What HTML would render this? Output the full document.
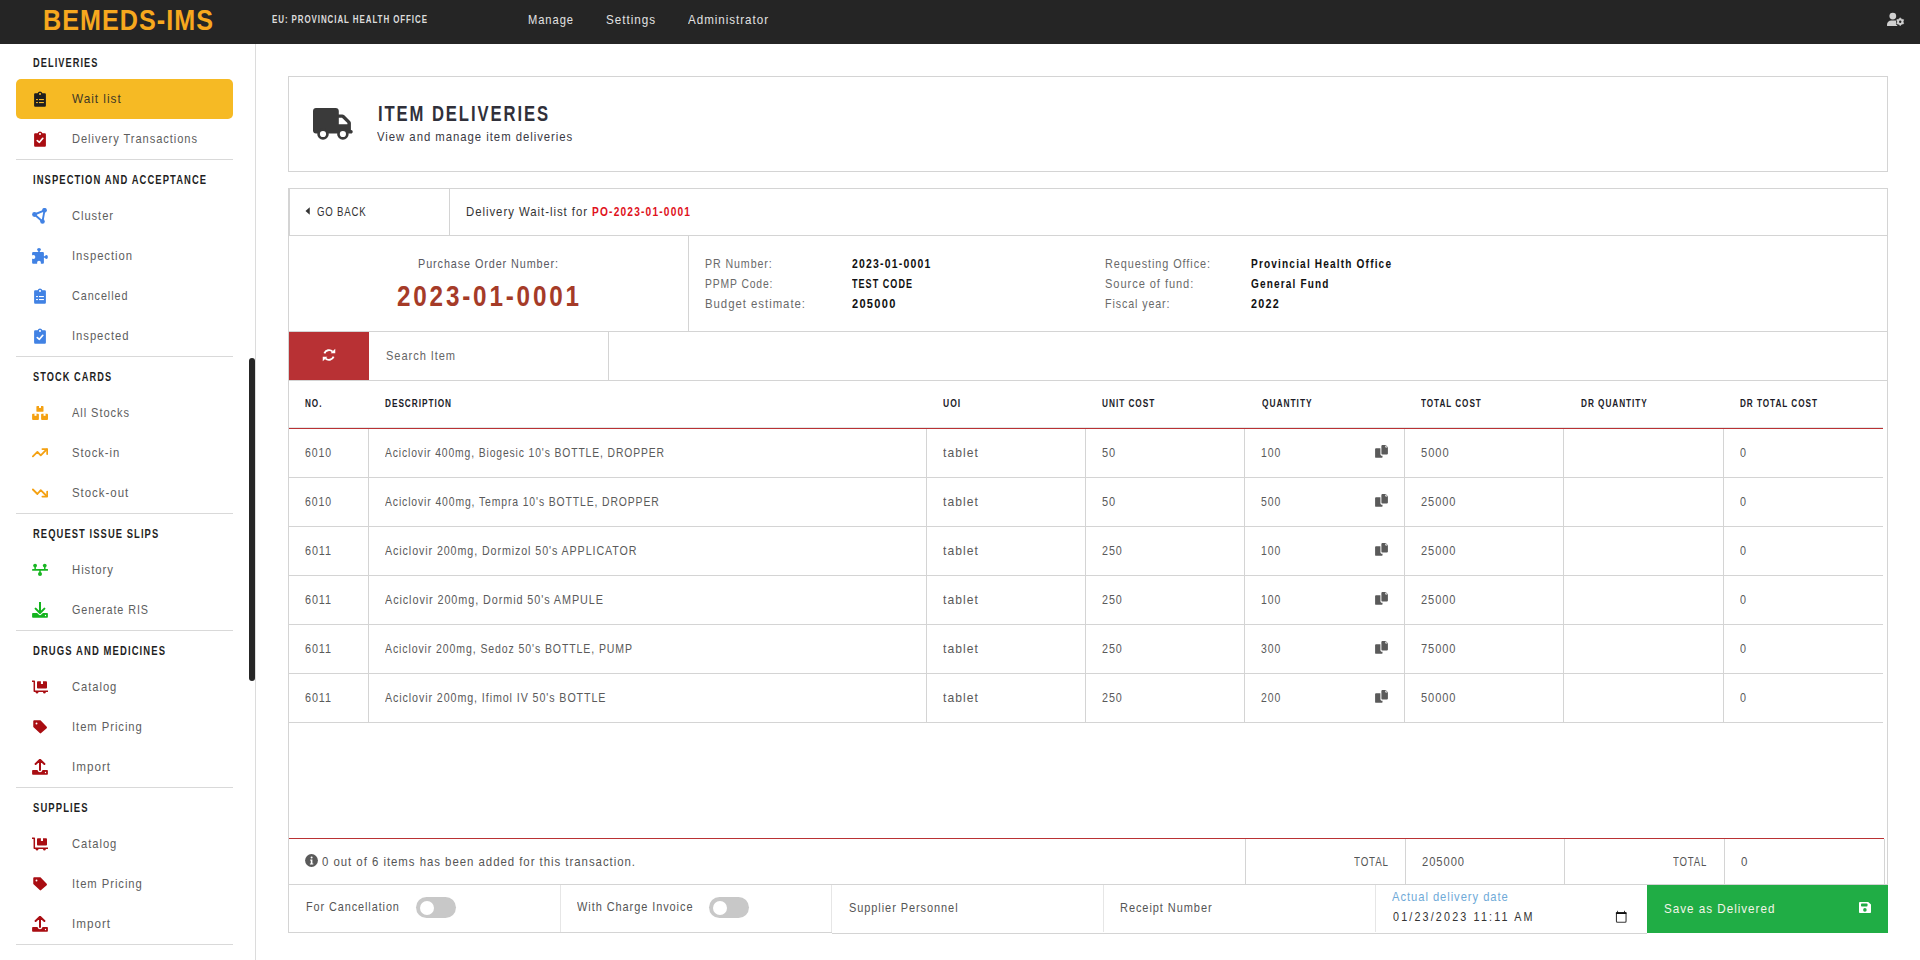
<!DOCTYPE html>
<html><head><meta charset="utf-8"><title>BEMEDS-IMS</title>
<style>
html,body{margin:0;padding:0;width:1920px;height:960px;overflow:hidden;background:#fff;}
body{position:relative;font-family:"Liberation Sans",sans-serif;}
div,span{position:absolute;box-sizing:border-box;}
.t{white-space:pre;line-height:1;transform-origin:0 0;}
.ic svg{display:block;width:100%;height:100%;}
</style></head><body>
<div style="left:0px;top:0px;width:1920px;height:44px;background:#252525"></div>
<span class="t" style="left:43.00px;top:6px;font-size:29px;color:#F7A81E;font-weight:bold;letter-spacing:1.20px;transform:scaleX(0.8670);">BEMEDS-IMS</span>
<span class="t" style="left:272.00px;top:13px;font-size:11.6px;color:#dcdcdc;font-weight:bold;letter-spacing:1.34px;transform:scaleX(0.6864);">EU: PROVINCIAL HEALTH OFFICE</span>
<span class="t" style="left:528.00px;top:13px;font-size:13px;color:#e2e2e2;letter-spacing:1.10px;transform:scaleX(0.8574);">Manage</span>
<span class="t" style="left:606.00px;top:13px;font-size:13px;color:#e2e2e2;letter-spacing:1.10px;transform:scaleX(0.8963);">Settings</span>
<span class="t" style="left:688.00px;top:13px;font-size:13px;color:#e2e2e2;letter-spacing:1.10px;transform:scaleX(0.8910);">Administrator</span>
<div style="left:255px;top:44px;width:1px;height:916px;background:#dcdcdc"></div>
<div style="left:249px;top:358px;width:6px;height:323px;background:#262626;border-radius:3px"></div>
<span class="t" style="left:32.50px;top:56px;font-size:13px;color:#1f1f1f;font-weight:bold;letter-spacing:1.50px;transform:scaleX(0.7104);">DELIVERIES</span>
<div style="left:16px;top:79px;width:217px;height:40px;background:#F6BA24;border-radius:5px"></div>
<span class="t" style="left:72.00px;top:92px;font-size:13px;color:#3e3826;letter-spacing:1.10px;transform:scaleX(0.9058);">Wait list</span>
<div class="ic" style="left:32px;top:91px;width:16px;height:16px"><svg viewBox="0 0 16 16"><path fill="#1e1e1e" d="M5.6 2.2A2.6 2.6 0 0 1 10.4 2.2H12.6c.75 0 1.3.55 1.3 1.3V14.45c0 .75-.55 1.3-1.3 1.3H3.4c-.75 0-1.3-.55-1.3-1.3V3.5c0-.75.55-1.3 1.3-1.3z"/><rect x="7" y="2" width="2" height="1.8" rx=".4" fill="#F6B927"/><rect x="4.1" y="8" width="1.8" height="1.1" fill="#F6B927"/><rect x="7" y="8" width="4.9" height="1.1" fill="#F6B927"/><rect x="4.1" y="11" width="1.8" height="1.1" fill="#F6B927"/><rect x="7" y="11" width="4.9" height="1.1" fill="#F6B927"/></svg></div>
<span class="t" style="left:72.00px;top:132px;font-size:13px;color:#5e5e5e;letter-spacing:1.10px;transform:scaleX(0.8546);">Delivery Transactions</span>
<div class="ic" style="left:32px;top:131px;width:16px;height:16px"><svg viewBox="0 0 16 16"><path fill="#A90D12" d="M5.6 2.2A2.6 2.6 0 0 1 10.4 2.2H12.6c.75 0 1.3.55 1.3 1.3V14.45c0 .75-.55 1.3-1.3 1.3H3.4c-.75 0-1.3-.55-1.3-1.3V3.5c0-.75.55-1.3 1.3-1.3z"/><rect x="7" y="2" width="2" height="1.8" rx=".4" fill="#fff"/><path d="M5.3 9.6l2.1 1.7 3.4-4" stroke="#fff" stroke-width="1.7" fill="none" stroke-linecap="round" stroke-linejoin="round"/></svg></div>
<div style="left:16px;top:159px;width:217px;height:1px;background:#d9d9d9"></div>
<span class="t" style="left:32.50px;top:173px;font-size:13px;color:#1f1f1f;font-weight:bold;letter-spacing:1.50px;transform:scaleX(0.7237);">INSPECTION AND ACCEPTANCE</span>
<span class="t" style="left:72.00px;top:209px;font-size:13px;color:#5e5e5e;letter-spacing:1.10px;transform:scaleX(0.8580);">Cluster</span>
<div class="ic" style="left:32px;top:208px;width:16px;height:16px"><svg viewBox="0 0 16 16"><path d="M2.5 6.5L12.5 2.3L10.5 13.5z" fill="none" stroke="#4182E4" stroke-width="1.9" stroke-linejoin="round"/><circle cx="12.5" cy="2.3" r="2.4" fill="#4182E4"/><circle cx="2.5" cy="6.5" r="2.4" fill="#4182E4"/><circle cx="10.5" cy="13.5" r="2.3" fill="#4182E4"/></svg></div>
<span class="t" style="left:72.00px;top:249px;font-size:13px;color:#5e5e5e;letter-spacing:1.10px;transform:scaleX(0.8675);">Inspection</span>
<div class="ic" style="left:32px;top:248px;width:16px;height:16px"><svg viewBox="0 0 16 16"><rect x="0.1" y="4" width="11.8" height="11.8" rx="1" fill="#4182E4"/><rect x="6.2" y="1.8" width="1.6" height="3" fill="#4182E4"/><ellipse cx="7" cy="1.6" rx="1.9" ry="1.5" fill="#4182E4"/><rect x="11" y="8.2" width="2.6" height="1.6" fill="#4182E4"/><ellipse cx="14.4" cy="9" rx="1.5" ry="1.9" fill="#4182E4"/><circle cx="1.4" cy="9" r="1.9" fill="#fff"/><rect x="-1" y="7.6" width="1.8" height="2.8" fill="#fff"/><circle cx="7" cy="14.7" r="1.9" fill="#fff"/><rect x="5.6" y="15" width="2.8" height="2" fill="#fff"/></svg></div>
<span class="t" style="left:72.00px;top:289px;font-size:13px;color:#5e5e5e;letter-spacing:1.10px;transform:scaleX(0.8317);">Cancelled</span>
<div class="ic" style="left:32px;top:288px;width:16px;height:16px"><svg viewBox="0 0 16 16"><path fill="#4182E4" d="M5.6 2.2A2.6 2.6 0 0 1 10.4 2.2H12.6c.75 0 1.3.55 1.3 1.3V14.45c0 .75-.55 1.3-1.3 1.3H3.4c-.75 0-1.3-.55-1.3-1.3V3.5c0-.75.55-1.3 1.3-1.3z"/><rect x="7" y="2" width="2" height="1.8" rx=".4" fill="#fff"/><rect x="4.1" y="8" width="1.8" height="1.1" fill="#fff"/><rect x="7" y="8" width="4.9" height="1.1" fill="#fff"/><rect x="4.1" y="11" width="1.8" height="1.1" fill="#fff"/><rect x="7" y="11" width="4.9" height="1.1" fill="#fff"/></svg></div>
<span class="t" style="left:72.00px;top:329px;font-size:13px;color:#5e5e5e;letter-spacing:1.10px;transform:scaleX(0.8670);">Inspected</span>
<div class="ic" style="left:32px;top:328px;width:16px;height:16px"><svg viewBox="0 0 16 16"><path fill="#4182E4" d="M5.6 2.2A2.6 2.6 0 0 1 10.4 2.2H12.6c.75 0 1.3.55 1.3 1.3V14.45c0 .75-.55 1.3-1.3 1.3H3.4c-.75 0-1.3-.55-1.3-1.3V3.5c0-.75.55-1.3 1.3-1.3z"/><rect x="7" y="2" width="2" height="1.8" rx=".4" fill="#fff"/><path d="M5.3 9.6l2.1 1.7 3.4-4" stroke="#fff" stroke-width="1.7" fill="none" stroke-linecap="round" stroke-linejoin="round"/></svg></div>
<div style="left:16px;top:356px;width:217px;height:1px;background:#d9d9d9"></div>
<span class="t" style="left:32.50px;top:370px;font-size:13px;color:#1f1f1f;font-weight:bold;letter-spacing:1.50px;transform:scaleX(0.7094);">STOCK CARDS</span>
<span class="t" style="left:72.00px;top:406px;font-size:13px;color:#5e5e5e;letter-spacing:1.10px;transform:scaleX(0.8511);">All Stocks</span>
<div class="ic" style="left:32px;top:405px;width:16px;height:16px"><svg viewBox="0 0 16 16"><rect x="4.4" y="0.9" width="7.1" height="5.9" rx=".9" fill="#F4A112"/><rect x="0.1" y="8.75" width="6.8" height="6.15" rx=".9" fill="#F4A112"/><rect x="9.1" y="8.75" width="6.9" height="6.15" rx=".9" fill="#F4A112"/><rect x="7" y="0.5" width="2" height="2.4" fill="#fff"/><rect x="2.5" y="8.4" width="2" height="2.4" fill="#fff"/><rect x="11.55" y="8.4" width="2" height="2.4" fill="#fff"/></svg></div>
<span class="t" style="left:72.00px;top:446px;font-size:13px;color:#5e5e5e;letter-spacing:1.10px;transform:scaleX(0.8636);">Stock-in</span>
<div class="ic" style="left:32px;top:445px;width:16px;height:16px"><svg viewBox="0 0 16 16"><path d="M0.9 11.4L5.4 6.9L8.75 10.3L14.6 4.5" fill="none" stroke="#F4A112" stroke-width="1.8" stroke-linecap="round" stroke-linejoin="round"/><path d="M10.4 4.1h4.8v4.9" fill="none" stroke="#F4A112" stroke-width="1.8" stroke-linecap="round" stroke-linejoin="round"/></svg></div>
<span class="t" style="left:72.00px;top:486px;font-size:13px;color:#5e5e5e;letter-spacing:1.10px;transform:scaleX(0.8821);">Stock-out</span>
<div class="ic" style="left:32px;top:485px;width:16px;height:16px"><svg viewBox="0 0 16 16"><path d="M0.9 4.5L5.4 9L8.75 5.1L14.6 11" fill="none" stroke="#F4A112" stroke-width="1.8" stroke-linecap="round" stroke-linejoin="round"/><path d="M10.4 11.6h4.8V6.6" fill="none" stroke="#F4A112" stroke-width="1.8" stroke-linecap="round" stroke-linejoin="round"/></svg></div>
<div style="left:16px;top:513px;width:217px;height:1px;background:#d9d9d9"></div>
<span class="t" style="left:32.50px;top:527px;font-size:13px;color:#1f1f1f;font-weight:bold;letter-spacing:1.50px;transform:scaleX(0.7210);">REQUEST ISSUE SLIPS</span>
<span class="t" style="left:72.00px;top:563px;font-size:13px;color:#5e5e5e;letter-spacing:1.10px;transform:scaleX(0.8715);">History</span>
<div class="ic" style="left:32px;top:562px;width:16px;height:16px"><svg viewBox="0 0 16 16"><rect x="0.1" y="7" width="15.9" height="1.8" rx=".5" fill="#18B622"/><rect x="2.4" y="4" width="1.5" height="3.5" fill="#18B622"/><rect x="12" y="4" width="1.5" height="3.5" fill="#18B622"/><rect x="7.25" y="8" width="1.5" height="3" fill="#18B622"/><circle cx="3.1" cy="3.6" r="1.9" fill="#18B622"/><circle cx="12.75" cy="3.6" r="1.9" fill="#18B622"/><circle cx="8" cy="12" r="2" fill="#18B622"/></svg></div>
<span class="t" style="left:72.00px;top:603px;font-size:13px;color:#5e5e5e;letter-spacing:1.10px;transform:scaleX(0.8299);">Generate RIS</span>
<div class="ic" style="left:32px;top:602px;width:16px;height:16px"><svg viewBox="0 0 16 16"><path d="M8 0.1V10.5M3.6 6.6L8 11L12.4 6.6" stroke="#14B41E" stroke-width="2" fill="none" stroke-linecap="round" stroke-linejoin="round"/><path fill="#14B41E" d="M0.1 11.8c0-.45.35-.8.8-.8h4.2l1.6 1.6c.8.8 1.8.8 2.6 0L10.9 11h4.2c.45 0 .8.35.8.8v3.1c0 .45-.35.8-.8.8H.9c-.45 0-.8-.35-.8-.8z"/><circle cx="13.5" cy="13.5" r=".65" fill="#fff"/></svg></div>
<div style="left:16px;top:630px;width:217px;height:1px;background:#d9d9d9"></div>
<span class="t" style="left:32.50px;top:644px;font-size:13px;color:#1f1f1f;font-weight:bold;letter-spacing:1.50px;transform:scaleX(0.7289);">DRUGS AND MEDICINES</span>
<span class="t" style="left:72.00px;top:680px;font-size:13px;color:#5e5e5e;letter-spacing:1.10px;transform:scaleX(0.8617);">Catalog</span>
<div class="ic" style="left:32px;top:679px;width:16px;height:16px"><svg viewBox="0 0 16 16"><path d="M0.4 2.25h1.9v10h13.5" stroke="#A90D12" stroke-width="1.5" fill="none" stroke-linecap="round" stroke-linejoin="round"/><rect x="5" y="2.25" width="10" height="7.25" rx=".9" fill="#A90D12"/><rect x="8.9" y="2" width="2.1" height="3" fill="#fff"/><circle cx="5" cy="13.3" r="1.25" fill="#A90D12"/><circle cx="12.4" cy="13.3" r="1.25" fill="#A90D12"/></svg></div>
<span class="t" style="left:72.00px;top:720px;font-size:13px;color:#5e5e5e;letter-spacing:1.10px;transform:scaleX(0.8646);">Item Pricing</span>
<div class="ic" style="left:32px;top:719px;width:16px;height:16px"><svg viewBox="0 0 16 16"><path fill="#A90D12" d="M1.25 2.35c0-.6.5-1.1 1.1-1.1h5.6c.3 0 .55.1.75.3l6 6.3c.4.4.4 1 0 1.4L9.15 14.1c-.4.4-1 .4-1.4 0L1.55 8.3c-.2-.2-.3-.45-.3-.75z"/><circle cx="4.5" cy="4.5" r=".95" fill="#fff"/></svg></div>
<span class="t" style="left:72.00px;top:760px;font-size:13px;color:#5e5e5e;letter-spacing:1.10px;transform:scaleX(0.8975);">Import</span>
<div class="ic" style="left:32px;top:759px;width:16px;height:16px"><svg viewBox="0 0 16 16"><path d="M8 11V1.2M3.6 5L8 0.8L12.4 5" stroke="#A90D12" stroke-width="2" fill="none" stroke-linecap="round" stroke-linejoin="round"/><path fill="#A90D12" d="M0.1 11.8c0-.45.35-.8.8-.8h4.6c.5 1.5 1.3 2.2 2.5 2.2s2-.7 2.5-2.2h4.6c.45 0 .8.35.8.8v3.1c0 .45-.35.8-.8.8H.9c-.45 0-.8-.35-.8-.8z"/><circle cx="13.5" cy="13.5" r=".65" fill="#fff"/></svg></div>
<div style="left:16px;top:787px;width:217px;height:1px;background:#d9d9d9"></div>
<span class="t" style="left:32.50px;top:801px;font-size:13px;color:#1f1f1f;font-weight:bold;letter-spacing:1.50px;transform:scaleX(0.7286);">SUPPLIES</span>
<span class="t" style="left:72.00px;top:837px;font-size:13px;color:#5e5e5e;letter-spacing:1.10px;transform:scaleX(0.8617);">Catalog</span>
<div class="ic" style="left:32px;top:836px;width:16px;height:16px"><svg viewBox="0 0 16 16"><path d="M0.4 2.25h1.9v10h13.5" stroke="#A90D12" stroke-width="1.5" fill="none" stroke-linecap="round" stroke-linejoin="round"/><rect x="5" y="2.25" width="10" height="7.25" rx=".9" fill="#A90D12"/><rect x="8.9" y="2" width="2.1" height="3" fill="#fff"/><circle cx="5" cy="13.3" r="1.25" fill="#A90D12"/><circle cx="12.4" cy="13.3" r="1.25" fill="#A90D12"/></svg></div>
<span class="t" style="left:72.00px;top:877px;font-size:13px;color:#5e5e5e;letter-spacing:1.10px;transform:scaleX(0.8646);">Item Pricing</span>
<div class="ic" style="left:32px;top:876px;width:16px;height:16px"><svg viewBox="0 0 16 16"><path fill="#A90D12" d="M1.25 2.35c0-.6.5-1.1 1.1-1.1h5.6c.3 0 .55.1.75.3l6 6.3c.4.4.4 1 0 1.4L9.15 14.1c-.4.4-1 .4-1.4 0L1.55 8.3c-.2-.2-.3-.45-.3-.75z"/><circle cx="4.5" cy="4.5" r=".95" fill="#fff"/></svg></div>
<span class="t" style="left:72.00px;top:917px;font-size:13px;color:#5e5e5e;letter-spacing:1.10px;transform:scaleX(0.8975);">Import</span>
<div class="ic" style="left:32px;top:916px;width:16px;height:16px"><svg viewBox="0 0 16 16"><path d="M8 11V1.2M3.6 5L8 0.8L12.4 5" stroke="#A90D12" stroke-width="2" fill="none" stroke-linecap="round" stroke-linejoin="round"/><path fill="#A90D12" d="M0.1 11.8c0-.45.35-.8.8-.8h4.6c.5 1.5 1.3 2.2 2.5 2.2s2-.7 2.5-2.2h4.6c.45 0 .8.35.8.8v3.1c0 .45-.35.8-.8.8H.9c-.45 0-.8-.35-.8-.8z"/><circle cx="13.5" cy="13.5" r=".65" fill="#fff"/></svg></div>
<div style="left:16px;top:944px;width:217px;height:1px;background:#d9d9d9"></div>
<div style="left:288px;top:76px;width:1600px;height:96px;border:1px solid #d4d4d4"></div>
<div class="ic" style="left:313px;top:108px;width:40px;height:32px"><svg viewBox="0 0 40 32"><path fill="#3a3a3a" d="M0 3C0 1.3 1.3 0 3 0H22.8C24.5 0 25.8 1.3 25.8 3V6.4H29.2C30 6.4 30.8 6.7 31.3 7.3L37 13C37.6 13.6 37.9 14.3 37.9 15.1V22H38.2C39.1 22 39.7 22.9 39.7 23.7C39.7 24.7 39 25.5 38.1 25.5H3C1.3 25.5 0 24.2 0 22.5Z"/><path fill="#fff" d="M25.8 9.7H29L34.4 15.1V16.2H25.8Z"/><circle cx="10" cy="26" r="5.75" fill="#3a3a3a"/><circle cx="29.9" cy="26" r="5.75" fill="#3a3a3a"/><circle cx="10" cy="26" r="3.1" fill="#fff"/><circle cx="29.9" cy="26" r="3.1" fill="#fff"/></svg></div>
<span class="t" style="left:377.50px;top:103px;font-size:22px;color:#30303a;font-weight:bold;letter-spacing:2.54px;transform:scaleX(0.7555);">ITEM DELIVERIES</span>
<span class="t" style="left:376.70px;top:130px;font-size:13px;color:#3a3a44;letter-spacing:1.10px;transform:scaleX(0.8737);">View and manage item deliveries</span>
<div style="left:288px;top:188px;width:1600px;height:745px;border:1px solid #d4d4d4;border-bottom:none"></div>
<div style="left:288px;top:932px;width:544px;height:1px;background:#d4d4d4"></div>
<div style="left:832px;top:933px;width:815px;height:1px;background:#d4d4d4"></div>
<div style="left:289px;top:189px;width:1px;height:46px;background:#d4d4d4"></div>
<div style="left:449px;top:189px;width:1px;height:46px;background:#d4d4d4"></div>
<div style="left:289px;top:235px;width:1598px;height:1px;background:#d4d4d4"></div>
<div class="ic" style="left:305px;top:206px;width:6px;height:10px"><svg viewBox="0 0 6 10"><path fill="#333" d="M4.75 1.25v7.5L0.5 5z"/></svg></div>
<span class="t" style="left:316.70px;top:205px;font-size:13px;color:#333;letter-spacing:1.10px;transform:scaleX(0.7412);">GO BACK</span>
<span class="t" style="left:466.00px;top:205px;font-size:13px;color:#333;letter-spacing:1.10px;transform:scaleX(0.8756);">Delivery Wait-list for</span>
<span class="t" style="left:592.00px;top:205px;font-size:13px;color:#e0121c;font-weight:bold;letter-spacing:1.50px;transform:scaleX(0.7836);">PO-2023-01-0001</span>
<div style="left:688px;top:236px;width:1px;height:95px;background:#d4d4d4"></div>
<div style="left:289px;top:331px;width:1598px;height:1px;background:#d4d4d4"></div>
<span class="t" style="left:418.00px;top:257px;font-size:13px;color:#5a5a62;letter-spacing:1.10px;transform:scaleX(0.8317);">Purchase Order Number:</span>
<span class="t" style="left:397.00px;top:282px;font-size:29px;color:#A53B28;font-weight:bold;letter-spacing:3.35px;transform:scaleX(0.8371);">2023-01-0001</span>
<span class="t" style="left:705.00px;top:257px;font-size:13px;color:#6a6a6a;letter-spacing:1.10px;transform:scaleX(0.8191);">PR Number:</span>
<span class="t" style="left:851.70px;top:257px;font-size:13px;color:#111;font-weight:bold;letter-spacing:1.50px;transform:scaleX(0.8034);">2023-01-0001</span>
<span class="t" style="left:705.00px;top:277px;font-size:13px;color:#6a6a6a;letter-spacing:1.10px;transform:scaleX(0.7959);">PPMP Code:</span>
<span class="t" style="left:851.70px;top:277px;font-size:13px;color:#111;font-weight:bold;letter-spacing:1.50px;transform:scaleX(0.6945);">TEST CODE</span>
<span class="t" style="left:705.00px;top:297px;font-size:13px;color:#6a6a6a;letter-spacing:1.10px;transform:scaleX(0.8768);">Budget estimate:</span>
<span class="t" style="left:851.70px;top:297px;font-size:13px;color:#111;font-weight:bold;letter-spacing:1.50px;transform:scaleX(0.8510);">205000</span>
<span class="t" style="left:1104.70px;top:257px;font-size:13px;color:#6a6a6a;letter-spacing:1.10px;transform:scaleX(0.8372);">Requesting Office:</span>
<span class="t" style="left:1251.30px;top:257px;font-size:13px;color:#111;font-weight:bold;letter-spacing:1.50px;transform:scaleX(0.7759);">Provincial Health Office</span>
<span class="t" style="left:1104.70px;top:277px;font-size:13px;color:#6a6a6a;letter-spacing:1.10px;transform:scaleX(0.8526);">Source of fund:</span>
<span class="t" style="left:1251.30px;top:277px;font-size:13px;color:#111;font-weight:bold;letter-spacing:1.50px;transform:scaleX(0.7718);">General Fund</span>
<span class="t" style="left:1104.70px;top:297px;font-size:13px;color:#6a6a6a;letter-spacing:1.10px;transform:scaleX(0.8211);">Fiscal year:</span>
<span class="t" style="left:1251.30px;top:297px;font-size:13px;color:#111;font-weight:bold;letter-spacing:1.50px;transform:scaleX(0.8287);">2022</span>
<div style="left:289px;top:332px;width:80px;height:48px;background:#B83134"></div>
<div class="ic" style="left:322px;top:348px;width:14px;height:14px"><svg viewBox="0 0 14 14"><path d="M2.4 5.4A5 5 0 0 1 10.6 3.6" stroke="#ffffff" stroke-width="1.9" fill="none"/><path fill="#ffffff" d="M13.25 0.7V5.3H8.6z"/><path d="M11.6 8.6A5 5 0 0 1 3.4 10.4" stroke="#ffffff" stroke-width="1.9" fill="none"/><path fill="#ffffff" d="M0.75 13.3V8.7H5.4z"/></svg></div>
<div style="left:608px;top:332px;width:1px;height:48px;background:#d4d4d4"></div>
<div style="left:289px;top:380px;width:1598px;height:1px;background:#d4d4d4"></div>
<span class="t" style="left:385.90px;top:349px;font-size:13px;color:#666;letter-spacing:1.10px;transform:scaleX(0.8522);">Search Item</span>
<span class="t" style="left:305.30px;top:397px;font-size:11.6px;color:#1c1c28;font-weight:bold;letter-spacing:1.34px;transform:scaleX(0.7038);">NO.</span>
<span class="t" style="left:385.00px;top:397px;font-size:11.6px;color:#1c1c28;font-weight:bold;letter-spacing:1.34px;transform:scaleX(0.7123);">DESCRIPTION</span>
<span class="t" style="left:942.50px;top:397px;font-size:11.6px;color:#1c1c28;font-weight:bold;letter-spacing:1.34px;transform:scaleX(0.7339);">UOI</span>
<span class="t" style="left:1102.40px;top:397px;font-size:11.6px;color:#1c1c28;font-weight:bold;letter-spacing:1.34px;transform:scaleX(0.7143);">UNIT COST</span>
<span class="t" style="left:1261.80px;top:397px;font-size:11.6px;color:#1c1c28;font-weight:bold;letter-spacing:1.34px;transform:scaleX(0.7224);">QUANTITY</span>
<span class="t" style="left:1421.00px;top:397px;font-size:11.6px;color:#1c1c28;font-weight:bold;letter-spacing:1.34px;transform:scaleX(0.7046);">TOTAL COST</span>
<span class="t" style="left:1580.80px;top:397px;font-size:11.6px;color:#1c1c28;font-weight:bold;letter-spacing:1.34px;transform:scaleX(0.7102);">DR QUANTITY</span>
<span class="t" style="left:1739.80px;top:397px;font-size:11.6px;color:#1c1c28;font-weight:bold;letter-spacing:1.34px;transform:scaleX(0.7073);">DR TOTAL COST</span>
<div style="left:289px;top:427px;width:1594px;height:1px;background:#e2e6e6"></div>
<div style="left:289px;top:428px;width:1594px;height:1px;background:#BA3234"></div>
<div style="left:368px;top:429px;width:1px;height:48px;background:#d4d4d4"></div>
<div style="left:926px;top:429px;width:1px;height:48px;background:#d4d4d4"></div>
<div style="left:1085px;top:429px;width:1px;height:48px;background:#d4d4d4"></div>
<div style="left:1244px;top:429px;width:1px;height:48px;background:#d4d4d4"></div>
<div style="left:1404px;top:429px;width:1px;height:48px;background:#d4d4d4"></div>
<div style="left:1563px;top:429px;width:1px;height:48px;background:#d4d4d4"></div>
<div style="left:1723px;top:429px;width:1px;height:48px;background:#d4d4d4"></div>
<div style="left:289px;top:477px;width:1594px;height:1px;background:#d4d4d4"></div>
<span class="t" style="left:305.30px;top:446px;font-size:13px;color:#5a5a5a;letter-spacing:1.10px;transform:scaleX(0.8068);">6010</span>
<span class="t" style="left:385.00px;top:446px;font-size:13px;color:#5a5a5a;letter-spacing:1.10px;transform:scaleX(0.7963);">Aciclovir 400mg, Biogesic 10&#x27;s BOTTLE, DROPPER</span>
<span class="t" style="left:942.75px;top:446px;font-size:13px;color:#5a5a5a;letter-spacing:1.10px;transform:scaleX(0.9317);">tablet</span>
<span class="t" style="left:1101.90px;top:446px;font-size:13px;color:#5a5a5a;letter-spacing:1.10px;transform:scaleX(0.8485);">50</span>
<span class="t" style="left:1261.25px;top:446px;font-size:13px;color:#5a5a5a;letter-spacing:1.10px;transform:scaleX(0.8039);">100</span>
<span class="t" style="left:1421.00px;top:446px;font-size:13px;color:#5a5a5a;letter-spacing:1.10px;transform:scaleX(0.8565);">5000</span>
<span class="t" style="left:1740.00px;top:446px;font-size:13px;color:#5a5a5a;letter-spacing:1.10px;transform:scaleX(0.8301);">0</span>
<div class="ic" style="left:1375px;top:445px;width:13px;height:13px"><svg viewBox="0 0 13 13"><path fill="#5a5a5a" d="M0.1 4.1c0-.5.4-.9.9-.9h4.4v6.1c0 .9.6 1.5 1.5 1.5h0.6v1.1c0 .5-.4.9-.9.9H1c-.5 0-.9-.4-.9-.9z"/><path fill="#5a5a5a" d="M6.4 0.9c0-.5.4-.9.9-.9h3.4l2.2 2.2v6.4c0 .5-.4.9-.9.9H7.3c-.5 0-.9-.4-.9-.9z"/><path fill="#fff" d="M10.3 0.2v1.8c0 .2.2.4.4.4h1.8z"/></svg></div>
<div style="left:368px;top:478px;width:1px;height:48px;background:#d4d4d4"></div>
<div style="left:926px;top:478px;width:1px;height:48px;background:#d4d4d4"></div>
<div style="left:1085px;top:478px;width:1px;height:48px;background:#d4d4d4"></div>
<div style="left:1244px;top:478px;width:1px;height:48px;background:#d4d4d4"></div>
<div style="left:1404px;top:478px;width:1px;height:48px;background:#d4d4d4"></div>
<div style="left:1563px;top:478px;width:1px;height:48px;background:#d4d4d4"></div>
<div style="left:1723px;top:478px;width:1px;height:48px;background:#d4d4d4"></div>
<div style="left:289px;top:526px;width:1594px;height:1px;background:#d4d4d4"></div>
<span class="t" style="left:305.30px;top:495px;font-size:13px;color:#5a5a5a;letter-spacing:1.10px;transform:scaleX(0.8068);">6010</span>
<span class="t" style="left:385.00px;top:495px;font-size:13px;color:#5a5a5a;letter-spacing:1.10px;transform:scaleX(0.8001);">Aciclovir 400mg, Tempra 10&#x27;s BOTTLE, DROPPER</span>
<span class="t" style="left:942.75px;top:495px;font-size:13px;color:#5a5a5a;letter-spacing:1.10px;transform:scaleX(0.9317);">tablet</span>
<span class="t" style="left:1101.90px;top:495px;font-size:13px;color:#5a5a5a;letter-spacing:1.10px;transform:scaleX(0.8485);">50</span>
<span class="t" style="left:1261.25px;top:495px;font-size:13px;color:#5a5a5a;letter-spacing:1.10px;transform:scaleX(0.8039);">500</span>
<span class="t" style="left:1421.00px;top:495px;font-size:13px;color:#5a5a5a;letter-spacing:1.10px;transform:scaleX(0.8507);">25000</span>
<span class="t" style="left:1740.00px;top:495px;font-size:13px;color:#5a5a5a;letter-spacing:1.10px;transform:scaleX(0.8301);">0</span>
<div class="ic" style="left:1375px;top:494px;width:13px;height:13px"><svg viewBox="0 0 13 13"><path fill="#5a5a5a" d="M0.1 4.1c0-.5.4-.9.9-.9h4.4v6.1c0 .9.6 1.5 1.5 1.5h0.6v1.1c0 .5-.4.9-.9.9H1c-.5 0-.9-.4-.9-.9z"/><path fill="#5a5a5a" d="M6.4 0.9c0-.5.4-.9.9-.9h3.4l2.2 2.2v6.4c0 .5-.4.9-.9.9H7.3c-.5 0-.9-.4-.9-.9z"/><path fill="#fff" d="M10.3 0.2v1.8c0 .2.2.4.4.4h1.8z"/></svg></div>
<div style="left:368px;top:527px;width:1px;height:48px;background:#d4d4d4"></div>
<div style="left:926px;top:527px;width:1px;height:48px;background:#d4d4d4"></div>
<div style="left:1085px;top:527px;width:1px;height:48px;background:#d4d4d4"></div>
<div style="left:1244px;top:527px;width:1px;height:48px;background:#d4d4d4"></div>
<div style="left:1404px;top:527px;width:1px;height:48px;background:#d4d4d4"></div>
<div style="left:1563px;top:527px;width:1px;height:48px;background:#d4d4d4"></div>
<div style="left:1723px;top:527px;width:1px;height:48px;background:#d4d4d4"></div>
<div style="left:289px;top:575px;width:1594px;height:1px;background:#d4d4d4"></div>
<span class="t" style="left:305.30px;top:544px;font-size:13px;color:#5a5a5a;letter-spacing:1.10px;transform:scaleX(0.8320);">6011</span>
<span class="t" style="left:385.00px;top:544px;font-size:13px;color:#5a5a5a;letter-spacing:1.10px;transform:scaleX(0.8236);">Aciclovir 200mg, Dormizol 50&#x27;s APPLICATOR</span>
<span class="t" style="left:942.75px;top:544px;font-size:13px;color:#5a5a5a;letter-spacing:1.10px;transform:scaleX(0.9317);">tablet</span>
<span class="t" style="left:1101.90px;top:544px;font-size:13px;color:#5a5a5a;letter-spacing:1.10px;transform:scaleX(0.8290);">250</span>
<span class="t" style="left:1261.25px;top:544px;font-size:13px;color:#5a5a5a;letter-spacing:1.10px;transform:scaleX(0.8039);">100</span>
<span class="t" style="left:1421.00px;top:544px;font-size:13px;color:#5a5a5a;letter-spacing:1.10px;transform:scaleX(0.8507);">25000</span>
<span class="t" style="left:1740.00px;top:544px;font-size:13px;color:#5a5a5a;letter-spacing:1.10px;transform:scaleX(0.8301);">0</span>
<div class="ic" style="left:1375px;top:543px;width:13px;height:13px"><svg viewBox="0 0 13 13"><path fill="#5a5a5a" d="M0.1 4.1c0-.5.4-.9.9-.9h4.4v6.1c0 .9.6 1.5 1.5 1.5h0.6v1.1c0 .5-.4.9-.9.9H1c-.5 0-.9-.4-.9-.9z"/><path fill="#5a5a5a" d="M6.4 0.9c0-.5.4-.9.9-.9h3.4l2.2 2.2v6.4c0 .5-.4.9-.9.9H7.3c-.5 0-.9-.4-.9-.9z"/><path fill="#fff" d="M10.3 0.2v1.8c0 .2.2.4.4.4h1.8z"/></svg></div>
<div style="left:368px;top:576px;width:1px;height:48px;background:#d4d4d4"></div>
<div style="left:926px;top:576px;width:1px;height:48px;background:#d4d4d4"></div>
<div style="left:1085px;top:576px;width:1px;height:48px;background:#d4d4d4"></div>
<div style="left:1244px;top:576px;width:1px;height:48px;background:#d4d4d4"></div>
<div style="left:1404px;top:576px;width:1px;height:48px;background:#d4d4d4"></div>
<div style="left:1563px;top:576px;width:1px;height:48px;background:#d4d4d4"></div>
<div style="left:1723px;top:576px;width:1px;height:48px;background:#d4d4d4"></div>
<div style="left:289px;top:624px;width:1594px;height:1px;background:#d4d4d4"></div>
<span class="t" style="left:305.30px;top:593px;font-size:13px;color:#5a5a5a;letter-spacing:1.10px;transform:scaleX(0.8320);">6011</span>
<span class="t" style="left:385.00px;top:593px;font-size:13px;color:#5a5a5a;letter-spacing:1.10px;transform:scaleX(0.8330);">Aciclovir 200mg, Dormid 50&#x27;s AMPULE</span>
<span class="t" style="left:942.75px;top:593px;font-size:13px;color:#5a5a5a;letter-spacing:1.10px;transform:scaleX(0.9317);">tablet</span>
<span class="t" style="left:1101.90px;top:593px;font-size:13px;color:#5a5a5a;letter-spacing:1.10px;transform:scaleX(0.8290);">250</span>
<span class="t" style="left:1261.25px;top:593px;font-size:13px;color:#5a5a5a;letter-spacing:1.10px;transform:scaleX(0.8039);">100</span>
<span class="t" style="left:1421.00px;top:593px;font-size:13px;color:#5a5a5a;letter-spacing:1.10px;transform:scaleX(0.8507);">25000</span>
<span class="t" style="left:1740.00px;top:593px;font-size:13px;color:#5a5a5a;letter-spacing:1.10px;transform:scaleX(0.8301);">0</span>
<div class="ic" style="left:1375px;top:592px;width:13px;height:13px"><svg viewBox="0 0 13 13"><path fill="#5a5a5a" d="M0.1 4.1c0-.5.4-.9.9-.9h4.4v6.1c0 .9.6 1.5 1.5 1.5h0.6v1.1c0 .5-.4.9-.9.9H1c-.5 0-.9-.4-.9-.9z"/><path fill="#5a5a5a" d="M6.4 0.9c0-.5.4-.9.9-.9h3.4l2.2 2.2v6.4c0 .5-.4.9-.9.9H7.3c-.5 0-.9-.4-.9-.9z"/><path fill="#fff" d="M10.3 0.2v1.8c0 .2.2.4.4.4h1.8z"/></svg></div>
<div style="left:368px;top:625px;width:1px;height:48px;background:#d4d4d4"></div>
<div style="left:926px;top:625px;width:1px;height:48px;background:#d4d4d4"></div>
<div style="left:1085px;top:625px;width:1px;height:48px;background:#d4d4d4"></div>
<div style="left:1244px;top:625px;width:1px;height:48px;background:#d4d4d4"></div>
<div style="left:1404px;top:625px;width:1px;height:48px;background:#d4d4d4"></div>
<div style="left:1563px;top:625px;width:1px;height:48px;background:#d4d4d4"></div>
<div style="left:1723px;top:625px;width:1px;height:48px;background:#d4d4d4"></div>
<div style="left:289px;top:673px;width:1594px;height:1px;background:#d4d4d4"></div>
<span class="t" style="left:305.30px;top:642px;font-size:13px;color:#5a5a5a;letter-spacing:1.10px;transform:scaleX(0.8320);">6011</span>
<span class="t" style="left:385.00px;top:642px;font-size:13px;color:#5a5a5a;letter-spacing:1.10px;transform:scaleX(0.8105);">Aciclovir 200mg, Sedoz 50&#x27;s BOTTLE, PUMP</span>
<span class="t" style="left:942.75px;top:642px;font-size:13px;color:#5a5a5a;letter-spacing:1.10px;transform:scaleX(0.9317);">tablet</span>
<span class="t" style="left:1101.90px;top:642px;font-size:13px;color:#5a5a5a;letter-spacing:1.10px;transform:scaleX(0.8290);">250</span>
<span class="t" style="left:1261.25px;top:642px;font-size:13px;color:#5a5a5a;letter-spacing:1.10px;transform:scaleX(0.8039);">300</span>
<span class="t" style="left:1421.00px;top:642px;font-size:13px;color:#5a5a5a;letter-spacing:1.10px;transform:scaleX(0.8507);">75000</span>
<span class="t" style="left:1740.00px;top:642px;font-size:13px;color:#5a5a5a;letter-spacing:1.10px;transform:scaleX(0.8301);">0</span>
<div class="ic" style="left:1375px;top:641px;width:13px;height:13px"><svg viewBox="0 0 13 13"><path fill="#5a5a5a" d="M0.1 4.1c0-.5.4-.9.9-.9h4.4v6.1c0 .9.6 1.5 1.5 1.5h0.6v1.1c0 .5-.4.9-.9.9H1c-.5 0-.9-.4-.9-.9z"/><path fill="#5a5a5a" d="M6.4 0.9c0-.5.4-.9.9-.9h3.4l2.2 2.2v6.4c0 .5-.4.9-.9.9H7.3c-.5 0-.9-.4-.9-.9z"/><path fill="#fff" d="M10.3 0.2v1.8c0 .2.2.4.4.4h1.8z"/></svg></div>
<div style="left:368px;top:674px;width:1px;height:48px;background:#d4d4d4"></div>
<div style="left:926px;top:674px;width:1px;height:48px;background:#d4d4d4"></div>
<div style="left:1085px;top:674px;width:1px;height:48px;background:#d4d4d4"></div>
<div style="left:1244px;top:674px;width:1px;height:48px;background:#d4d4d4"></div>
<div style="left:1404px;top:674px;width:1px;height:48px;background:#d4d4d4"></div>
<div style="left:1563px;top:674px;width:1px;height:48px;background:#d4d4d4"></div>
<div style="left:1723px;top:674px;width:1px;height:48px;background:#d4d4d4"></div>
<div style="left:289px;top:722px;width:1594px;height:1px;background:#d4d4d4"></div>
<span class="t" style="left:305.30px;top:691px;font-size:13px;color:#5a5a5a;letter-spacing:1.10px;transform:scaleX(0.8320);">6011</span>
<span class="t" style="left:385.00px;top:691px;font-size:13px;color:#5a5a5a;letter-spacing:1.10px;transform:scaleX(0.8232);">Aciclovir 200mg, Ifimol IV 50&#x27;s BOTTLE</span>
<span class="t" style="left:942.75px;top:691px;font-size:13px;color:#5a5a5a;letter-spacing:1.10px;transform:scaleX(0.9317);">tablet</span>
<span class="t" style="left:1101.90px;top:691px;font-size:13px;color:#5a5a5a;letter-spacing:1.10px;transform:scaleX(0.8290);">250</span>
<span class="t" style="left:1261.25px;top:691px;font-size:13px;color:#5a5a5a;letter-spacing:1.10px;transform:scaleX(0.8039);">200</span>
<span class="t" style="left:1421.00px;top:691px;font-size:13px;color:#5a5a5a;letter-spacing:1.10px;transform:scaleX(0.8507);">50000</span>
<span class="t" style="left:1740.00px;top:691px;font-size:13px;color:#5a5a5a;letter-spacing:1.10px;transform:scaleX(0.8301);">0</span>
<div class="ic" style="left:1375px;top:690px;width:13px;height:13px"><svg viewBox="0 0 13 13"><path fill="#5a5a5a" d="M0.1 4.1c0-.5.4-.9.9-.9h4.4v6.1c0 .9.6 1.5 1.5 1.5h0.6v1.1c0 .5-.4.9-.9.9H1c-.5 0-.9-.4-.9-.9z"/><path fill="#5a5a5a" d="M6.4 0.9c0-.5.4-.9.9-.9h3.4l2.2 2.2v6.4c0 .5-.4.9-.9.9H7.3c-.5 0-.9-.4-.9-.9z"/><path fill="#fff" d="M10.3 0.2v1.8c0 .2.2.4.4.4h1.8z"/></svg></div>
<div style="left:289px;top:838px;width:1595px;height:1px;background:#BA3234"></div>
<div style="left:1245px;top:839px;width:1px;height:45px;background:#d4d4d4"></div>
<div style="left:1405px;top:839px;width:1px;height:45px;background:#d4d4d4"></div>
<div style="left:1564px;top:839px;width:1px;height:45px;background:#d4d4d4"></div>
<div style="left:1724px;top:839px;width:1px;height:45px;background:#d4d4d4"></div>
<div style="left:1884px;top:839px;width:1px;height:45px;background:#d4d4d4"></div>
<div style="left:289px;top:884px;width:1598px;height:1px;background:#d4d4d4"></div>
<div class="ic" style="left:305px;top:854px;width:13px;height:13px"><svg viewBox="0 0 13 13"><circle cx="6.5" cy="6.5" r="6.4" fill="#5a5a5a"/><circle cx="6.6" cy="3.6" r="1" fill="#fff"/><path fill="#fff" d="M5.3 5.6h2.1v3.9h.9v1.1H4.9V9.5h.9V6.7h-.5z"/></svg></div>
<span class="t" style="left:322.00px;top:855px;font-size:13px;color:#555;letter-spacing:1.10px;transform:scaleX(0.8783);">0 out of 6 items has been added for this transaction.</span>
<span class="t" style="left:1354.00px;top:855px;font-size:13px;color:#555;letter-spacing:1.10px;transform:scaleX(0.7540);">TOTAL</span>
<span class="t" style="left:1422.00px;top:855px;font-size:13px;color:#555;letter-spacing:1.10px;transform:scaleX(0.8592);">205000</span>
<span class="t" style="left:1673.30px;top:855px;font-size:13px;color:#555;letter-spacing:1.10px;transform:scaleX(0.7385);">TOTAL</span>
<span class="t" style="left:1740.60px;top:855px;font-size:13px;color:#555;letter-spacing:1.10px;transform:scaleX(0.8854);">0</span>
<div style="left:560px;top:885px;width:1px;height:47px;background:#e6e6e6"></div>
<div style="left:831px;top:885px;width:1px;height:47px;background:#e6e6e6"></div>
<div style="left:1103px;top:885px;width:1px;height:47px;background:#e6e6e6"></div>
<div style="left:1375px;top:885px;width:1px;height:47px;background:#e6e6e6"></div>
<span class="t" style="left:305.60px;top:900px;font-size:13px;color:#555;letter-spacing:1.10px;transform:scaleX(0.8358);">For Cancellation</span>
<span class="t" style="left:577.00px;top:900px;font-size:13px;color:#555;letter-spacing:1.10px;transform:scaleX(0.8440);">With Charge Invoice</span>
<div style="left:416px;top:897px;width:40px;height:21px;background:#c8c8c8;border-radius:11px"></div>
<div style="left:420px;top:900.5px;width:14px;height:14px;background:#fff;border-radius:50%"></div>
<div style="left:709px;top:897px;width:40px;height:21px;background:#c8c8c8;border-radius:11px"></div>
<div style="left:713px;top:900.5px;width:14px;height:14px;background:#fff;border-radius:50%"></div>
<span class="t" style="left:848.90px;top:901px;font-size:13px;color:#555;letter-spacing:1.10px;transform:scaleX(0.8448);">Supplier Personnel</span>
<span class="t" style="left:1120.00px;top:901px;font-size:13px;color:#555;letter-spacing:1.10px;transform:scaleX(0.8464);">Receipt Number</span>
<span class="t" style="left:1392.00px;top:890px;font-size:13px;color:#6FAAD8;letter-spacing:1.10px;transform:scaleX(0.8619);">Actual delivery date</span>
<span class="t" style="left:1393.00px;top:910px;font-size:13px;color:#333;letter-spacing:2.60px;transform:scaleX(0.8286);">01/23/2023 11:11 AM</span>
<div class="ic" style="left:1615px;top:910px;width:12px;height:13px"><svg viewBox="0 0 12 13"><rect x="1.45" y="2.7" width="9.6" height="9.6" rx="1" fill="none" stroke="#3a3a3a" stroke-width="1.1"/><rect x="0.9" y="2.2" width="10.6" height="1.8" fill="#111"/><path d="M2 2.4L2.6 0.3L3.4 2.4zM8.8 2.4L9.5 0.3L10.3 2.4z" fill="#111"/></svg></div>
<div style="left:1647px;top:885px;width:241px;height:48px;background:#20AD45"></div>
<span class="t" style="left:1663.90px;top:902px;font-size:13px;color:#f4f4e8;letter-spacing:1.10px;transform:scaleX(0.8969);">Save as Delivered</span>
<div class="ic" style="left:1859px;top:902px;width:12px;height:11px"><svg viewBox="0 0 12 11"><path fill="#ffffff" d="M0 1.1C0 .5.5 0 1.1 0h8.1L12 2.6v7.3c0 .6-.5 1.1-1.1 1.1H1.1C.5 11 0 10.5 0 9.9z"/><rect x="2" y="1.5" width="6.5" height="3" rx=".8" fill="#20AD45"/><circle cx="5.9" cy="7.9" r="1.8" fill="#20AD45"/></svg></div>
<div class="ic" style="left:1887px;top:12px;width:18px;height:14px"><svg viewBox="0 0 18 14"><circle cx="5.8" cy="4.1" r="3.4" fill="#d0d0d0"/><path fill="#d0d0d0" d="M0 12.8c0-2.4 1.9-4.3 4.3-4.3h3.4c.7 0 1.2.1 1.7.3c-.3.5-.4 1.1-.4 1.7 0 1.2.5 2.3 1.3 3.1V14H.6c-.3 0-.6-.3-.6-.6z"/><polygon points="13.20,5.70 14.65,7.19 16.66,7.70 16.10,9.70 16.66,11.70 14.65,12.21 13.20,13.70 11.75,12.21 9.74,11.70 10.30,9.70 9.74,7.70 11.75,7.19" fill="#252525" stroke="#252525" stroke-width="1.6" stroke-linejoin="round"/><polygon points="13.20,5.70 14.65,7.19 16.66,7.70 16.10,9.70 16.66,11.70 14.65,12.21 13.20,13.70 11.75,12.21 9.74,11.70 10.30,9.70 9.74,7.70 11.75,7.19" fill="#d0d0d0" stroke="#d0d0d0" stroke-width=".6" stroke-linejoin="round"/><circle cx="13.2" cy="9.7" r="1.2" fill="#252525"/></svg></div>
</body></html>
